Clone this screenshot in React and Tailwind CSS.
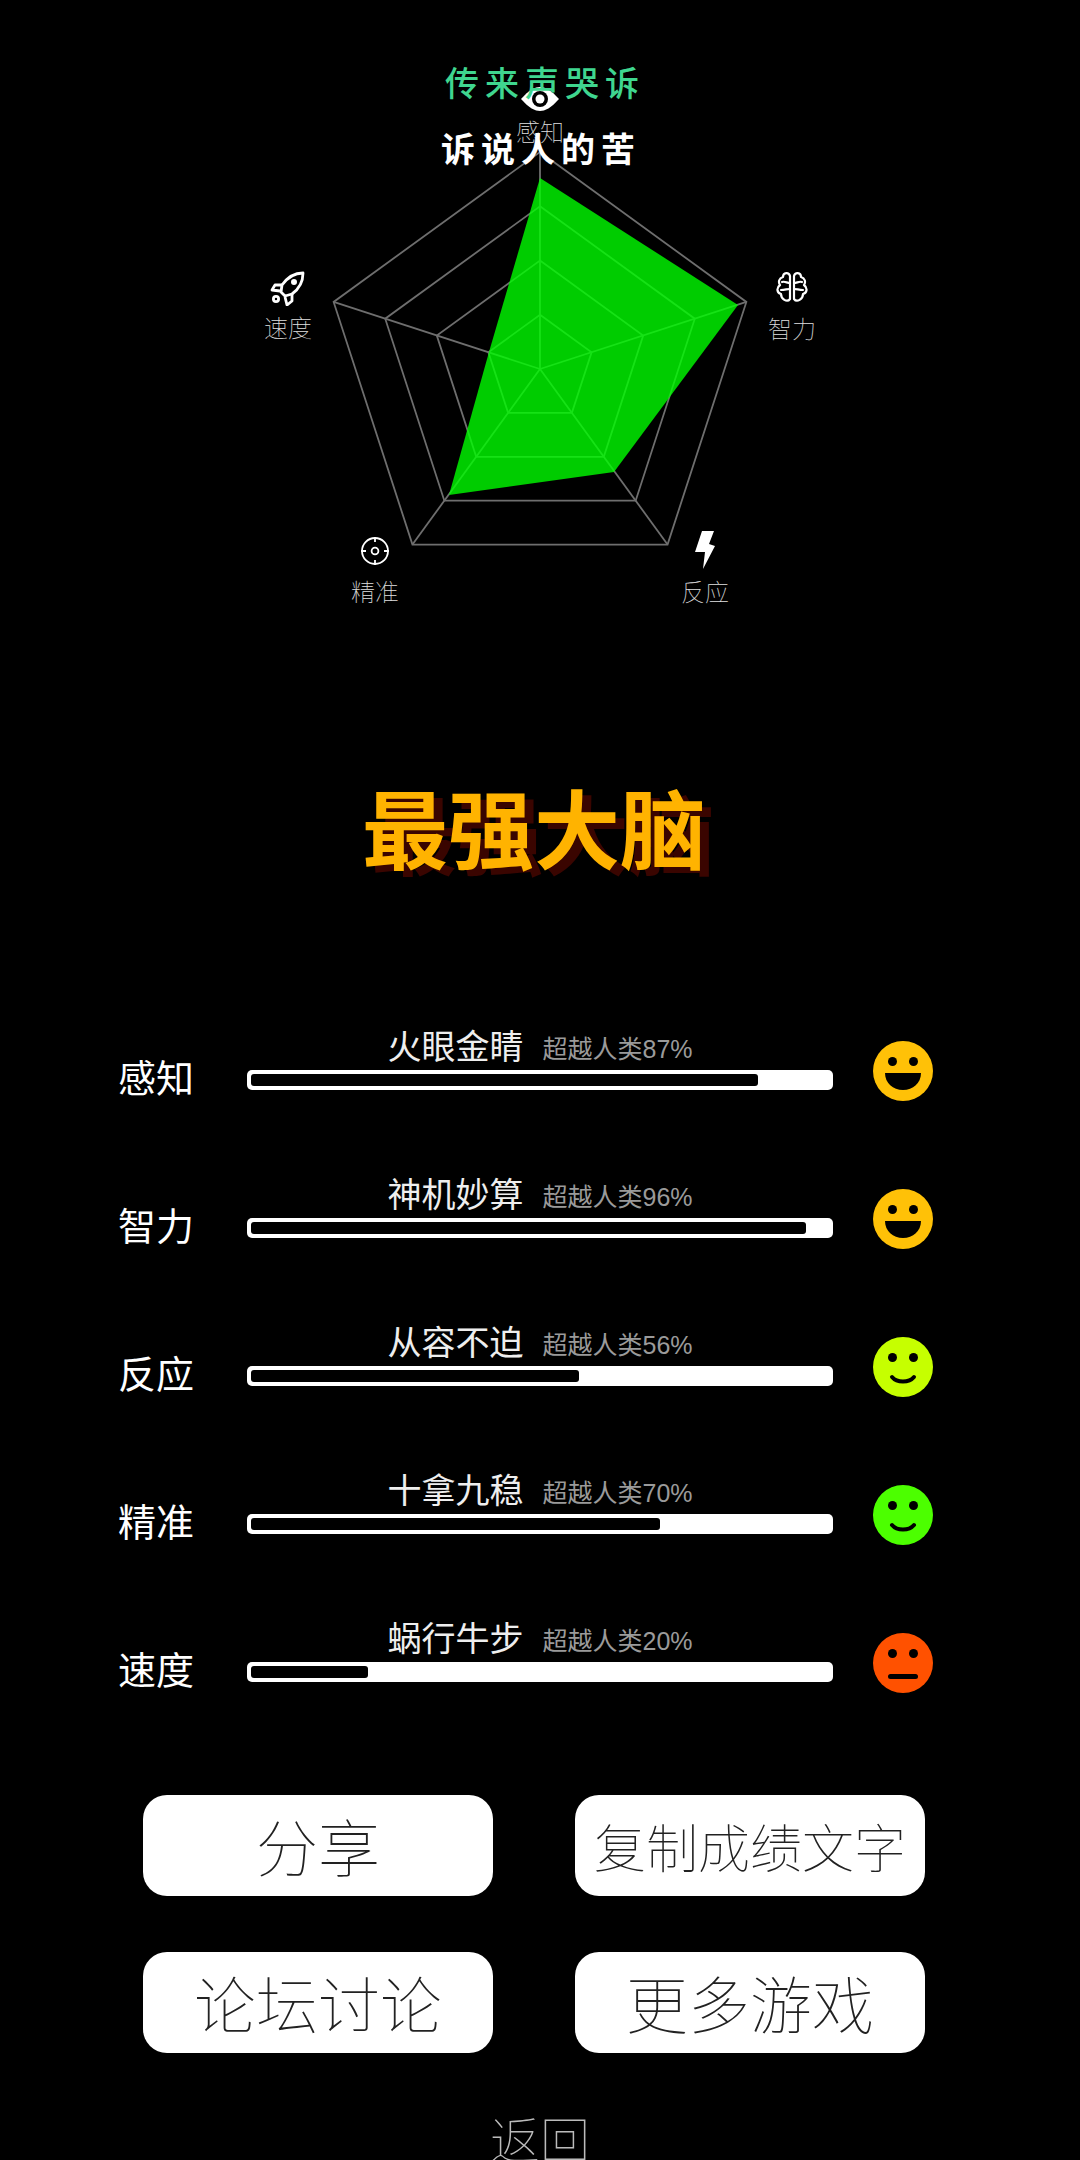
import React from "react";

// radar geometry, page coordinates inside the 1080 wide chart box
const CENTER = { x: 540, y: 369 };
const RADIUS = 217;
const AXES = [-90, -18, 54, 126, 198];

const pointAt = (deg, ratio) => {
  const rad = (deg * Math.PI) / 180;
  return [
    CENTER.x + Math.cos(rad) * RADIUS * ratio,
    CENTER.y + Math.sin(rad) * RADIUS * ratio,
  ];
};

const ring = (ratio) =>
  AXES.map((deg) => pointAt(deg, ratio).join(",")).join(" ");

const SCORE_POINTS = "540,178 738,305 614,472 449,495 489,352";

const CJK = "font-['Noto_Sans_CJK_SC','Liberation_Sans',sans-serif]";

const EyeIcon = () => (
  <svg width="38" height="24" viewBox="0 0 38 24">
    <path d="M0 12 C8 3 14 0 19 0 C24 0 30 3 38 12 C30 21 24 24 19 24 C14 24 8 21 0 12 Z" fill="#fff" />
    <circle cx="19" cy="12" r="8" fill="#000" />
    <circle cx="19" cy="12" r="4.5" fill="#fff" />
  </svg>
);

const RocketIcon = () => (
  <svg width="36" height="36" viewBox="0 0 36 36" fill="none" stroke="#fff" strokeWidth="2.8" strokeLinejoin="round">
    <path d="M33 3 C24 3 17 8 12 15 L11 22 L15 26 L22 24 C29 19 33 12 33 3 Z" />
    <path d="M13 15 L5 15 L2 20 L10 21" />
    <path d="M22 24 L22 31 L17 35 L15 27" />
    <circle cx="24" cy="12" r="1.6" fill="#fff" />
    <circle cx="6" cy="29" r="2.6" />
  </svg>
);

const BrainIcon = () => (
  <svg width="32" height="30" viewBox="0 0 32 30" fill="none" stroke="#fff" strokeWidth="2.2" strokeLinejoin="round" strokeLinecap="round">
    <path d="M14 4 C13 0 7 0 7 5 C3 6 2 10 4 13 C0 16 1 21 5 22 C5 27 11 31 14 27 Z" />
    <path d="M18 4 C19 0 25 0 25 5 C29 6 30 10 28 13 C32 16 31 21 27 22 C27 27 21 31 18 27 Z" />
    <path d="M6 10 C9 9 11 11 14 11 M5 18 C9 18 11 17 14 17" />
    <path d="M26 10 C23 9 21 11 18 11 M27 18 C23 18 21 17 18 17" />
  </svg>
);

const TargetIcon = () => (
  <svg width="30" height="30" viewBox="0 0 30 30" fill="none" stroke="#fff" strokeWidth="1.8">
    <circle cx="15" cy="15" r="13" />
    <circle cx="15" cy="15" r="3.4" />
    <path d="M15 1 V6 M15 24 V29 M1 15 H6 M24 15 H29" />
  </svg>
);

const BoltIcon = () => (
  <svg width="22" height="38" viewBox="0 0 22 38" fill="#fff">
    <path d="M8 0 L20 0 L15 13 L21 15 L9 38 L11 21 L1 21 Z" />
  </svg>
);

const AXIS_LABELS = [
  { name: "感知", icon: <EyeIcon />, pos: "left-[480px] top-[80px]", gap: "-mt-[2px]" },
  { name: "智力", icon: <BrainIcon />, pos: "left-[732px] top-[268px]", gap: "mt-[7px]" },
  { name: "反应", icon: <BoltIcon />, pos: "left-[645px] top-[531px]", gap: "mt-[7px]" },
  { name: "精准", icon: <TargetIcon />, pos: "left-[315px] top-[532px]", gap: "mt-[6px]" },
  { name: "速度", icon: <RocketIcon />, pos: "left-[228px] top-[269px]", gap: "mt-[5px]" },
];

const Face = ({ color, mood }) => (
  <svg width="60" height="60" viewBox="0 0 60 60">
    <circle cx="30" cy="30" r="30" fill={color} />
    <circle cx="19.5" cy="20.5" r="4.5" fill="#000" />
    <circle cx="40.5" cy="20.5" r="4.5" fill="#000" />
    {mood === "great" && <path d="M12 32 H48 C48 42 40 49 30 49 C20 49 12 42 12 32 Z" fill="#000" />}
    {mood === "good" && <path d="M19 40 C24 46 36 46 41 40" fill="none" stroke="#000" strokeWidth="4" strokeLinecap="round" />}
    {mood === "flat" && <rect x="15" y="41" width="30" height="5" rx="2.5" fill="#000" />}
  </svg>
);

// fill is the bar width, it runs a little ahead of the rounded percent
const STATS = [
  { label: "感知", title: "火眼金睛", percent: 87, fill: 87.7, color: "#ffc107", mood: "great" },
  { label: "智力", title: "神机妙算", percent: 96, fill: 96, color: "#ffc107", mood: "great" },
  { label: "反应", title: "从容不迫", percent: 56, fill: 56.7, color: "#c6ff00", mood: "good" },
  { label: "精准", title: "十拿九稳", percent: 70, fill: 70.7, color: "#4cff00", mood: "good" },
  { label: "速度", title: "蜗行牛步", percent: 20, fill: 20.2, color: "#ff5100", mood: "flat" },
];

const ACTIONS = [
  { text: "分享", size: "text-[62px]" },
  { text: "复制成绩文字", size: "text-[52px]" },
  { text: "论坛讨论", size: "text-[62px]" },
  { text: "更多游戏", size: "text-[62px]" },
];

const RadarChart = () => (
  <div className="relative h-[640px]">
    <svg className="block" width="1080" height="640" viewBox="0 0 1080 640">
      {[0.25, 0.5, 0.75, 1].map((ratio) => (
        <polygon key={ratio} points={ring(ratio)} fill="none" stroke="#6e6e6e" strokeWidth="1.8" />
      ))}
      {AXES.map((deg) => {
        const [x, y] = pointAt(deg, 1);
        return <line key={deg} x1={CENTER.x} y1={CENTER.y} x2={x} y2={y} stroke="#6e6e6e" strokeWidth="1.8" />;
      })}
      <polygon points={SCORE_POINTS} fill="#00ff00" fillOpacity="0.8" />
    </svg>

    {AXIS_LABELS.map((item) => (
      <div key={item.name} className={`absolute flex w-[120px] flex-col items-center ${item.pos}`}>
        <div className="flex h-[38px] items-center justify-center">{item.icon}</div>
        <span className={`text-[24px] leading-[30px] font-thin text-[#e0e0e0] ${item.gap}`}>{item.name}</span>
      </div>
    ))}

    {/* lyric lines that float over the chart */}
    <div className="absolute left-[445px] top-[60px] text-[34px] leading-[44px] font-medium tracking-[6px] whitespace-nowrap text-[#3fd68f]">传来声哭诉</div>
    <div className="absolute left-[441px] top-[126px] text-[34px] leading-[44px] font-bold tracking-[6px] whitespace-nowrap text-white">诉说人的苦</div>
  </div>
);

const StatRow = ({ stat }) => (
  <div className="flex h-[148px] items-start pl-[118px]">
    <div className="mt-[51px] w-[129px] text-[38px] leading-[46px] text-white">{stat.label}</div>
    <div className="w-[586px]">
      <div className="mt-[20px] flex h-[48px] items-center justify-center">
        <span className="-mt-[2px] text-[34px] leading-[48px] text-[#eeeeee]">{stat.title}</span>
        <span className="ml-[19px] mt-[5px] text-[25px] leading-[48px] text-[#9a9a9a] font-['Liberation_Sans','Noto_Sans_CJK_SC',sans-serif]">
          超越人类{stat.percent}%
        </span>
      </div>
      <div className="h-[20px] rounded-[5px] bg-white p-[4px]">
        <div className="h-full rounded-[3px] bg-black" style={{ width: `${stat.fill}%` }} />
      </div>
    </div>
    <div className="mt-[39px] ml-[40px]">
      <Face color={stat.color} mood={stat.mood} />
    </div>
  </div>
);

export default function App() {
  return (
    <div className={`h-[2160px] w-full overflow-hidden bg-black ${CJK}`}>
      <RadarChart />

      <h1 className="mt-[136px] h-[100px] pr-[12px] text-center text-[86px] leading-[100px] font-bold text-[#ffb300] [text-shadow:9px_6px_0_#3a0500]">
        最强大脑
      </h1>

      <div className="mt-[126px]">
        {STATS.map((stat) => (
          <StatRow key={stat.label} stat={stat} />
        ))}
      </div>

      <div className="mt-[53px] ml-[143px] grid w-[782px] grid-cols-2 gap-x-[82px] gap-y-[56px]">
        {ACTIONS.map((action) => (
          <button
            key={action.text}
            className={`h-[101px] rounded-[24px] bg-white font-thin text-[#222222] ${action.size}`}
          >
            {action.text}
          </button>
        ))}
      </div>

      <div className="mt-[48px] text-center text-[50px] leading-[72px] font-thin text-[#bbbbbb]">返回</div>
    </div>
  );
}
